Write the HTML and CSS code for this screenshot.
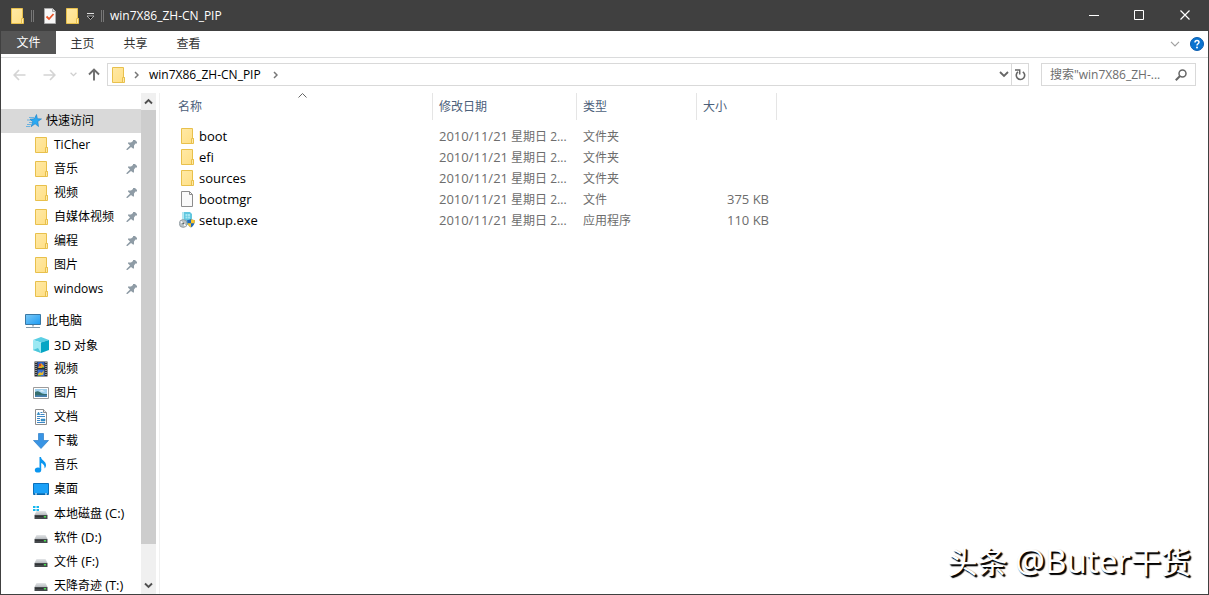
FILE: index.html
```html
<!DOCTYPE html>
<html lang="zh-CN">
<head>
<meta charset="utf-8">
<meta name="viewport" content="width=device-width, initial-scale=1">
<title>win7X86_ZH-CN_PIP</title>
<link rel="stylesheet" href="styles.css">
</head>
<body>
<svg class="defs" aria-hidden="true">
  <defs>
    <linearGradient id="gFolder" x1="0" y1="0" x2="1" y2="1"><stop offset="0" stop-color="#ffe9a6"/><stop offset="1" stop-color="#ffdf84"/></linearGradient>
    <linearGradient id="gScreen" x1="0" y1="0" x2="1" y2="1"><stop offset="0" stop-color="#7cc8f5"/><stop offset="1" stop-color="#1b9cf5"/></linearGradient>
    <linearGradient id="gDrive" x1="0" y1="0" x2="0" y2="1"><stop offset="0" stop-color="#e4e6e8"/><stop offset="1" stop-color="#b5b9bd"/></linearGradient>
    <symbol id="folder" viewBox="0 0 16 16">
      <path d="M2.500.5h11v10h1v5h-12z" fill="url(#gFolder)" stroke="#e8c04c"/>
      <path d="M12.500 15v-4.500h2V15" fill="#ffe9a6" stroke="#e8c04c"/>
    </symbol>
    <symbol id="pin" viewBox="0 0 12 12">
      <path d="M7 1h2l2 2v1.500H9.500L8 6.500v3H7L5 8 1.500 11H.5v-1L4 6.500 2 4.500V3.500h3L7 2z" fill="#8f9ca6"/>
    </symbol>
    <symbol id="drive" viewBox="0 0 16 16">
      <path d="M3.500 6h9L14.500 10h-13z" fill="url(#gDrive)"/>
      <path d="M1.500 10h13v4h-13z" fill="#45494c"/>
      <path d="M2 11.500h8" stroke="#303335"/>
      <path d="M11 11h2v1.500h-2z" fill="#48e04e"/>
    </symbol>
  </defs>
</svg>

<div class="window">
  <header class="titlebar">
    <svg class="icon" viewBox="0 0 16 16"><use href="#folder"/></svg>
    <span class="grip"></span>
    <button class="quick" aria-label="属性"><svg class="icon" viewBox="0 0 16 16"><path d="M2.500.5h8l3 3v12h-11z" fill="#f7f7f7" stroke="#aaa"/><path d="M10.500.5v3h3" fill="#ddd" stroke="#aaa"/><path d="M4.500 8.500L7 11l4.500-5" fill="none" stroke="#e8562a" stroke-width="1.800"/></svg></button>
    <button class="quick" aria-label="新建文件夹"><svg class="icon" viewBox="0 0 16 16"><use href="#folder"/></svg></button>
    <button class="quick narrow" aria-label="自定义快速访问工具栏"><svg width="9" height="8" viewBox="0 0 9 8"><path d="M1 1.500h7" stroke="#ddd"/><path d="M1 4h7L4.500 7.500z" fill="#111" stroke="#ddd" stroke-width=".7"/></svg></button>
    <span class="grip"></span>
    <h1 class="title">win7X86_ZH-CN_PIP</h1>
    <div class="captions">
      <button aria-label="最小化"><svg width="11" height="11" viewBox="0 0 11 11"><path d="M1 5.500h10" stroke="#fff"/></svg></button>
      <button aria-label="最大化"><svg width="11" height="11" viewBox="0 0 11 11"><path d="M.5.5h9v9h-9z" fill="none" stroke="#fff"/></svg></button>
      <button aria-label="关闭"><svg width="11" height="11" viewBox="0 0 11 11"><path d="M.5.5l9 9M9.500.5l-9 9" stroke="#fff" stroke-width="1.200"/></svg></button>
    </div>
  </header>

  <nav class="ribbon">
    <button class="tab file">文件</button>
    <button class="tab">主页</button>
    <button class="tab">共享</button>
    <button class="tab">查看</button>
    <div class="ribbon-end">
      <button aria-label="展开功能区"><svg width="10" height="6" viewBox="0 0 10 6"><path d="M1 .8l4 4 4-4" fill="none" stroke="#a0a0a0" stroke-width="1.200"/></svg></button>
      <button aria-label="帮助"><svg width="14" height="14" viewBox="0 0 14 14"><circle cx="7" cy="7" r="6.500" fill="#0a74d0" stroke="#0a5cae"/><path d="M5 5.500c0-2.700 4-2.700 4-.2 0 1.500-2 1.500-2 3.200" fill="none" stroke="#fff" stroke-width="1.500"/><circle cx="7" cy="10.500" r="1" fill="#fff"/></svg></button>
    </div>
  </nav>

  <div class="toolbar">
    <div class="history">
      <button class="arrow" aria-label="后退"><svg width="13" height="12" viewBox="0 0 13 12"><path d="M12.500 6H1.500M6 1L1.200 6 6 11" fill="none" stroke="#d4d4d4" stroke-width="1.700"/></svg></button>
      <button class="arrow" aria-label="前进"><svg width="13" height="12" viewBox="0 0 13 12"><path d="M.5 6h11M7 1l4.800 5L7 11" fill="none" stroke="#d4d4d4" stroke-width="1.700"/></svg></button>
      <button class="recent" aria-label="最近浏览的位置"><svg width="7" height="5" viewBox="0 0 7 5"><path d="M.6.8l2.900 2.900L6.400.8" fill="none" stroke="#cfcfcf" stroke-width="1.300"/></svg></button>
      <button class="up" aria-label="上移"><svg width="12" height="13" viewBox="0 0 12 13"><path d="M6 12.500V1.500M1 6.500l5-5 5 5" fill="none" stroke="#6d6d6d" stroke-width="1.900"/></svg></button>
    </div>
    <div class="address">
      <svg class="icon" viewBox="0 0 16 16"><use href="#folder"/></svg>
      <svg class="sep" width="5" height="8" viewBox="0 0 5 8"><path d="M1 1l3 3-3 3" fill="none" stroke="#777" stroke-width="1.500"/></svg>
      <a class="crumb" href="#">win7X86_ZH-CN_PIP</a>
      <svg class="sep" width="5" height="8" viewBox="0 0 5 8"><path d="M1 1l3 3-3 3" fill="none" stroke="#777" stroke-width="1.500"/></svg>
      <button class="drop" aria-label="以前的位置"><svg width="10" height="7" viewBox="0 0 10 7"><path d="M1 1l4 4 4-4" fill="none" stroke="#666" stroke-width="1.800"/></svg></button>
      <button class="refresh" aria-label="刷新"><svg width="11" height="12" viewBox="0 0 11 12"><path d="M7.800 2.800A4.200 4.200 0 1 1 3 2.900" fill="none" stroke="#666" stroke-width="1.600"/><path d="M0 1h4.700v4.500" fill="none" stroke="#666" stroke-width="1.500"/></svg></button>
    </div>
    <div class="search">
      <input class="query" type="text" aria-label="搜索" placeholder='搜索"win7X86_ZH-...'>
      <svg width="12" height="12" viewBox="0 0 12 12"><circle cx="7.500" cy="4.500" r="3.500" fill="none" stroke="#666" stroke-width="1.500"/><path d="M5 7L.8 11.200" stroke="#666" stroke-width="2"/></svg>
    </div>
  </div>

  <div class="body">
    <aside class="sidebar">
      <ul class="tree">
        <li class="root selected"><svg class="icon" viewBox="0 0 16 16"><path d="M3 4.500h5M1 7h5M3 9.500h3M1 11.500h4M0 13.500h4" stroke="#6db2de"/><path d="M10.500 1.500l.9 4.200 4.100.2-3.700 2.600.7 5-3.400-2.700-4.100 2.900 1.800-4.900L4 6.200l4.300-.4z" fill="#2aa9f2" stroke="#1a80c8" stroke-width=".6"/></svg><span>快速访问</span></li>
        <li><svg class="icon" viewBox="0 0 16 16"><use href="#folder"/></svg><span>TiCher</span><svg class="pin" viewBox="0 0 12 12"><use href="#pin"/></svg></li>
        <li><svg class="icon" viewBox="0 0 16 16"><use href="#folder"/></svg><span>音乐</span><svg class="pin" viewBox="0 0 12 12"><use href="#pin"/></svg></li>
        <li><svg class="icon" viewBox="0 0 16 16"><use href="#folder"/></svg><span>视频</span><svg class="pin" viewBox="0 0 12 12"><use href="#pin"/></svg></li>
        <li><svg class="icon" viewBox="0 0 16 16"><use href="#folder"/></svg><span>自媒体视频</span><svg class="pin" viewBox="0 0 12 12"><use href="#pin"/></svg></li>
        <li><svg class="icon" viewBox="0 0 16 16"><use href="#folder"/></svg><span>编程</span><svg class="pin" viewBox="0 0 12 12"><use href="#pin"/></svg></li>
        <li><svg class="icon" viewBox="0 0 16 16"><use href="#folder"/></svg><span>图片</span><svg class="pin" viewBox="0 0 12 12"><use href="#pin"/></svg></li>
        <li><svg class="icon" viewBox="0 0 16 16"><use href="#folder"/></svg><span>windows</span><svg class="pin" viewBox="0 0 12 12"><use href="#pin"/></svg></li>
      </ul>
      <ul class="tree">
        <li class="root pc"><svg class="icon" viewBox="0 0 16 16"><path d="M.5 1.500h15v10H.5z" fill="url(#gScreen)" stroke="#3a78a4"/><path d="M7 12h2v1.500H7z" fill="#a9bac6"/><path d="M1 14.500h14" stroke="#8399a8"/></svg><span>此电脑</span></li>
        <li><svg class="icon" viewBox="0 0 16 16"><path d="M0 3l8-3 8 3-8 2.500z" fill="#5bcfe4"/><path d="M0 3l8 2.500V16l-8-3z" fill="#9be9f3"/><path d="M8 5.500L16 3v10l-8 3z" fill="#06a5c4"/><path d="M0 13l5-2 3 5z" fill="#4cc6da"/></svg><span><span class="latin">3D</span> 对象</span></li>
        <li><svg class="icon" viewBox="0 0 16 16"><path d="M1.500.5h13v15h-13z" fill="#2b2b2b"/><path d="M3 1v14M13 1v14" stroke="#eee" stroke-dasharray="1 1"/><path d="M4.500 1h7v6h-7z" fill="#2d5fbd"/><path d="M4.500 8.500h7V15h-7z" fill="#3a70d0"/><path d="M6 5l2-3 3 3v2H5z" fill="#e5a423"/><circle cx="7" cy="4" r="1.200" fill="#d83c2b"/><path d="M5 13l2-2 1.500 1L11 9.500 10 14H5z" fill="#eab92e"/><path d="M9 6h2v1H9zM5 14h3v1H5z" fill="#49a44a"/></svg><span>视频</span></li>
        <li><svg class="icon" viewBox="0 0 16 16"><path d="M.5 2.500h15v11H.5z" fill="#fff" stroke="#9c9c9c"/><path d="M2 4h12v8H2z" fill="#9fd0ee"/><path d="M2 7c3-2 5 0 7 1.500 2 .5 3 .5 5 .5v3H2z" fill="#356e6e"/><path d="M2 10.500c4-1 8 .5 12-.8V12H2z" fill="#477fae"/><path d="M6 6l3-1 3 1.500H8z" fill="#e9f5fc"/></svg><span>图片</span></li>
        <li><svg class="icon" viewBox="0 0 16 16"><path d="M2.500.5h8l3 3v12h-11z" fill="#fff" stroke="#8d8d8d"/><path d="M10.500.5v3h3" fill="#e6e6e6" stroke="#8d8d8d"/><path d="M7.500 3.500h2M7.500 5.500h4M4 7.500h8M4 9.500h3M4 11.500h3M4 13.500h8" stroke="#3d87c5"/><path d="M4 6l1.500-3L7 6M8 10h4v2H8z" fill="#3d94c9" stroke="#1f78b8" stroke-width=".5"/></svg><span>文档</span></li>
        <li><svg class="icon" viewBox="0 0 16 16"><path d="M5.500.5h5v7h5L8 15.500.5 7.500h5z" fill="#3894e4" stroke="#2b7cc7" stroke-width=".7"/></svg><span>下载</span></li>
        <li><svg class="icon" viewBox="0 0 16 16"><ellipse cx="5" cy="13" rx="3.200" ry="2.600" fill="#0a96f0"/><path d="M6.500 0H8c.3 3.500 5 4 5 8 0 1.500-.5 2.500-1.500 3.500C12 8 9.500 6.500 8.200 6v7H6.500z" fill="#0a96f0"/></svg><span>音乐</span></li>
        <li><svg class="icon" viewBox="0 0 16 16"><path d="M.5 2.500h15v11H.5z" fill="#1ba1f8" stroke="#0b70bb"/><path d="M1 13h14" stroke="#075a9b"/><path d="M2 13h2M12 13h2" stroke="#fff"/></svg><span>桌面</span></li>
        <li><svg class="icon" viewBox="0 0 16 16"><use href="#drive"/><path d="M0 1h2.500v2H0zM3.500 1H6v2H3.500zM0 4h2.500v2H0zM3.500 4H6v2H3.500z" fill="#16b7ef"/></svg><span>本地磁盘 <span class="latin">(C:)</span></span></li>
        <li><svg class="icon" viewBox="0 0 16 16"><use href="#drive"/></svg><span>软件 <span class="latin">(D:)</span></span></li>
        <li><svg class="icon" viewBox="0 0 16 16"><use href="#drive"/></svg><span>文件 <span class="latin">(F:)</span></span></li>
        <li><svg class="icon" viewBox="0 0 16 16"><use href="#drive"/></svg><span>天降奇迹 <span class="latin">(T:)</span></span></li>
      </ul>
    </aside>
    <div class="scrollbar">
      <button aria-label="向上滚动"><svg width="9" height="7" viewBox="0 0 9 7"><path d="M1 5.500L4.500 2 8 5.500" fill="none" stroke="#505050" stroke-width="1.900"/></svg></button>
      <div class="track"><div class="thumb"></div></div>
      <button aria-label="向下滚动"><svg width="9" height="7" viewBox="0 0 9 7"><path d="M1 1.500L4.500 5 8 1.500" fill="none" stroke="#505050" stroke-width="1.900"/></svg></button>
    </div>
    <main class="content">
      <table class="files">
        <colgroup><col class="c-name"><col class="c-date"><col class="c-type"><col class="c-size"></colgroup>
        <thead>
          <tr>
            <th>名称<svg class="sort" width="9" height="5" viewBox="0 0 9 5"><path d="M.5 4.500l4-4 4 4" fill="none" stroke="#666"/></svg></th>
            <th>修改日期</th><th>类型</th><th>大小</th>
          </tr>
        </thead>
        <tbody>
          <tr><td><div class="name"><svg class="icon" viewBox="0 0 16 16"><use href="#folder"/></svg>boot</div></td><td><span class="latin">2010/11/21</span> 星期日 2...</td><td>文件夹</td><td></td></tr>
          <tr><td><div class="name"><svg class="icon" viewBox="0 0 16 16"><use href="#folder"/></svg>efi</div></td><td><span class="latin">2010/11/21</span> 星期日 2...</td><td>文件夹</td><td></td></tr>
          <tr><td><div class="name"><svg class="icon" viewBox="0 0 16 16"><use href="#folder"/></svg>sources</div></td><td><span class="latin">2010/11/21</span> 星期日 2...</td><td>文件夹</td><td></td></tr>
          <tr><td><div class="name"><svg class="icon" viewBox="0 0 16 16"><path d="M2.500.5h8l3 3v12h-11z" fill="#fafafa" stroke="#8d8d8d"/><path d="M10.500.5v3h3" fill="none" stroke="#8d8d8d"/></svg>bootmgr</div></td><td><span class="latin">2010/11/21</span> 星期日 2...</td><td>文件</td><td><span class="latin">375 KB</span></td></tr>
          <tr><td><div class="name"><svg class="icon" viewBox="0 0 16 16"><path d="M3.500 0H11l2 2v11H3.500z" fill="#62c7df"/><path d="M3.500 0H5v13H3.500z" fill="#b8eaf3"/><path d="M6.500 2h2v2h-2zM9 2h2v2H9zM6.500 4.500h2v2h-2zM9 4.500h2v2H9z" fill="#a5e6f2"/><circle cx="4.200" cy="11.500" r="3.900" fill="#b9c1c5" stroke="#838d92" stroke-width=".7"/><path d="M4.200 11.500L1.700 9.500M4.200 11.500L6.500 14" stroke="#fff" stroke-width="1.300"/><circle cx="4.200" cy="11.500" r="1" fill="#59666c"/><path d="M12 7c1.200.8 2.400 1 3.800 1 0 3.500-1 6-3.800 7.500C9.200 14 8.200 11.500 8.200 8c1.500 0 2.600-.2 3.800-1z" fill="#2168b9"/><path d="M12 7c1.200.8 2.400 1 3.800 1l-.2 3.200H12zM8.500 11.200H12v4.300c-2.200-1.200-3.200-2.600-3.500-4.300z" fill="#f7c52d"/></svg>setup.exe</div></td><td><span class="latin">2010/11/21</span> 星期日 2...</td><td>应用程序</td><td><span class="latin">110 KB</span></td></tr>
        </tbody>
      </table>
    </main>
  </div>
  <p class="watermark">头条 <span class="handle">@Buter</span>干货</p>
</div>
</body>
</html>
```
FILE: styles.css
```css
* {
  box-sizing: border-box;
}

body {
  margin: 0;
  font: 12px/16px "Open Sans", "Noto Sans CJK SC", sans-serif;
  color: #000;
}

button {
  display: flex;
  align-items: center;
  justify-content: center;
  padding: 0;
  border: 0;
  background: none;
  font: inherit;
  color: inherit;
}

svg {
  display: block;
  flex: none;
}

.defs {
  position: absolute;
  width: 0;
  height: 0;
}

.icon {
  width: 16px;
  height: 16px;
}

.latin {
  font-size: 13px;
}

.window {
  position: relative;
  display: flex;
  flex-direction: column;
  height: 100vh;
  border: 1px solid #404040;
  background: #fff;
  overflow: hidden;
}

.titlebar {
  display: flex;
  align-items: center;
  flex: none;
  height: 30px;
  padding-left: 8px;
  background: #404040;
  color: #fff;
}

.grip {
  width: 3px;
  height: 12px;
  margin: 0 5px 0 6px;
  border: solid #777;
  border-width: 0 1px;
}

.quick {
  width: 22px;
}

.quick + .grip {
  margin: 0 6px 0 4px;
}

.narrow {
  width: 14px;
}

.title {
  margin: 0;
  font-size: 12px;
  font-weight: 400;
}

.captions {
  display: flex;
  align-self: stretch;
  margin-left: auto;
}

.captions button {
  width: 46px;
  height: 29px;
}

.ribbon {
  display: flex;
  flex: none;
  height: 27px;
  border-bottom: 1px solid #dadbdc;
  color: #333;
}

.tab {
  width: 53px;
}

.file {
  width: 55px;
  height: 23px;
  background: #555;
  color: #fff;
}

.ribbon-end {
  display: flex;
  align-items: center;
  gap: 10px;
  margin-left: auto;
  padding-right: 4px;
}

.toolbar {
  display: flex;
  align-items: center;
  flex: none;
  height: 33px;
  padding-right: 12px;
}

.history {
  display: flex;
  align-items: center;
  flex: none;
  width: 106px;
  padding-left: 12px;
}

.arrow {
  width: 13px;
  margin-right: 17px;
}

.recent {
  width: 7px;
  margin-right: 11px;
  margin-left: -3px;
}

.address {
  display: flex;
  align-items: center;
  flex: 1;
  height: 23px;
  padding-left: 2px;
  border: 1px solid #d9d9d9;
}

.sep {
  margin: 0 10px 0 8px;
}

.crumb {
  margin-right: 4px;
  color: #000;
  text-decoration: none;
}

.drop {
  width: 14px;
  margin-left: auto;
}

.refresh {
  width: 17px;
  height: 100%;
  border-left: 1px solid #d9d9d9;
}

.search {
  display: flex;
  align-items: center;
  flex: none;
  width: 155px;
  height: 23px;
  margin-left: 12px;
  padding: 0 8px;
  border: 1px solid #d9d9d9;
}

.query {
  flex: 1;
  min-width: 0;
  padding: 0;
  border: 0;
  outline: 0;
  background: none;
  font: inherit;
}

.query::placeholder {
  color: #6d6d6d;
  opacity: 1;
}

.body {
  display: flex;
  flex: 1;
  min-height: 0;
  padding-top: 2px;
}

.sidebar {
  flex: none;
  width: 140px;
  padding-top: 16px;
  overflow: hidden;
}

.tree {
  margin: 0 0 8px;
  padding: 0;
  list-style: none;
}

.tree li {
  display: flex;
  align-items: center;
  gap: 5px;
  height: 24px;
  padding: 0 3px 0 32px;
  white-space: nowrap;
}

.tree .root {
  gap: 4px;
  padding-left: 25px;
}

.tree .pc {
  gap: 5px;
  padding-left: 24px;
}

.tree .selected {
  background: #d9d9d9;
}

.pin {
  width: 12px;
  height: 12px;
  margin-left: auto;
}

.scrollbar {
  display: flex;
  flex-direction: column;
  flex: none;
  width: 15px;
  background: #f0f0f0;
}

.scrollbar button {
  height: 17px;
}

.track {
  flex: 1;
}

.thumb {
  height: 93%;
  background: #cdcdcd;
}

.content {
  flex: 1;
  min-width: 0;
  margin-left: 3px;
  border-left: 1px solid #f0f0f0;
}

.files {
  width: 617px;
  border-collapse: separate;
  border-spacing: 0;
  table-layout: fixed;
  color: #6d6d6d;
}

.c-name {
  width: 273px;
}

.c-date {
  width: 144px;
}

.c-type {
  width: 120px;
}

.c-size {
  width: 80px;
}

.files th {
  position: relative;
  height: 27px;
  padding: 0 6px;
  border-right: 1px solid #e5e5e5;
  font-weight: 400;
  text-align: left;
  color: #4c607a;
}

.files th:first-child {
  padding-left: 18px;
}

.files tbody::before {
  content: "";
  display: block;
  height: 6px;
}

.files td {
  height: 21px;
  padding: 0 6px;
  white-space: nowrap;
}

.files td:first-child {
  padding-bottom: 2px;
  padding-left: 19px;
}

.files td:last-child {
  padding-right: 8px;
  text-align: right;
}

.name {
  display: flex;
  align-items: center;
  gap: 4px;
  font-size: 13px;
  color: #000;
}

.sort {
  position: absolute;
  top: 0;
  left: 138px;
}

.watermark {
  position: absolute;
  right: 17px;
  bottom: 12px;
  margin: 0;
  font: 30px/40px "Noto Sans", "Noto Sans CJK SC", sans-serif;
  color: #fff;
  text-shadow: 1px 1px 1px #000, 2px 2px 1px #000;
}

.handle {
  font-size: 33px;
}
```
